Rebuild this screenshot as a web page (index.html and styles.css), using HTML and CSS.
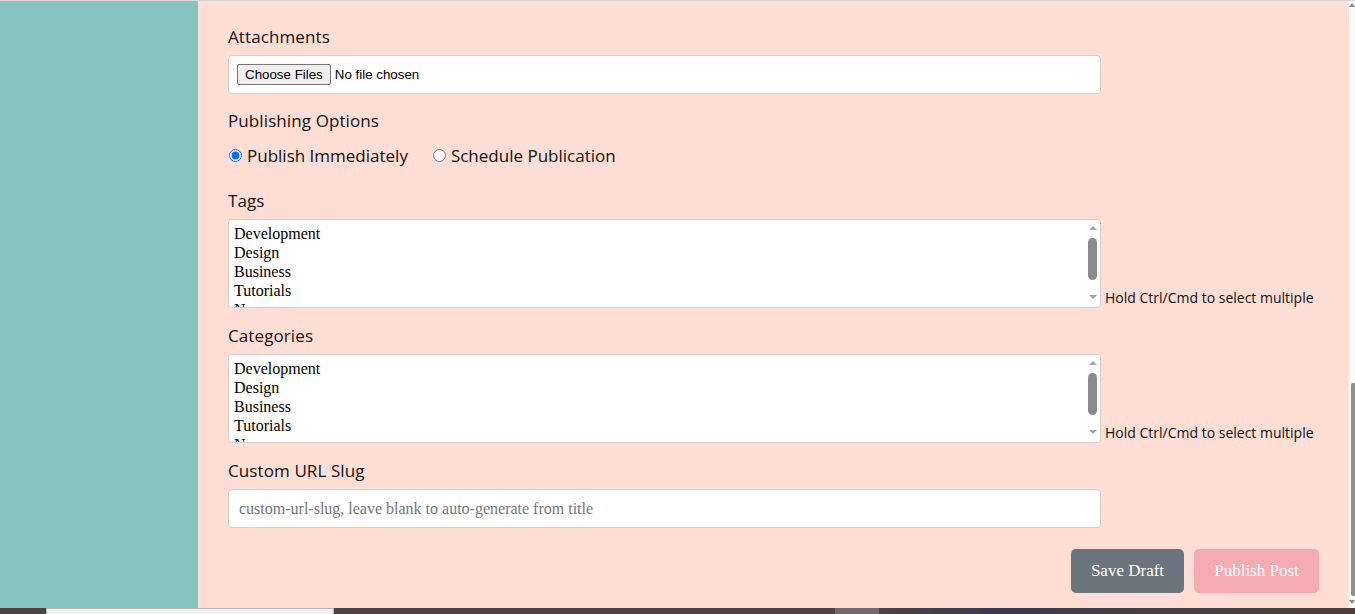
FILE: index.html
```html
<!DOCTYPE html>
<html lang="en">
<head>
<meta charset="utf-8">
<title>New Post</title>
<link rel="stylesheet" href="styles.css">
</head>
<body>
<div class="topline"></div>
<div class="page">
  <aside class="sidebar"></aside>
  <main class="main">
    <form class="form">
      <div class="field">
        <label class="label" for="files">Attachments</label>
        <div class="file-box"><input id="files" class="file-input" type="file" multiple></div>
      </div>

      <div class="field">
        <span class="label">Publishing Options</span>
        <div class="radios">
          <label class="radio"><input type="radio" name="pub" checked> Publish Immediately</label>
          <label class="radio"><input type="radio" name="pub"> Schedule Publication</label>
        </div>
      </div>

      <div class="field field-select">
        <label class="label" for="tags">Tags</label>
        <div class="select-row">
          <div class="listbox-wrap">
            <select id="tags" class="listbox" multiple>
              <option>Development</option>
              <option>Design</option>
              <option>Business</option>
              <option>Tutorials</option>
              <option>News</option>
            </select>
            <div class="fake-sb" aria-hidden="true">
              <span class="sb-arrow up"></span>
              <span class="sb-thumb"></span>
              <span class="sb-arrow down"></span>
            </div>
          </div>
          <small class="hint">Hold Ctrl/Cmd to select multiple</small>
        </div>
      </div>

      <div class="field field-select">
        <label class="label" for="cats">Categories</label>
        <div class="select-row">
          <div class="listbox-wrap">
            <select id="cats" class="listbox" multiple>
              <option>Development</option>
              <option>Design</option>
              <option>Business</option>
              <option>Tutorials</option>
              <option>News</option>
            </select>
            <div class="fake-sb" aria-hidden="true">
              <span class="sb-arrow up"></span>
              <span class="sb-thumb"></span>
              <span class="sb-arrow down"></span>
            </div>
          </div>
          <small class="hint">Hold Ctrl/Cmd to select multiple</small>
        </div>
      </div>

      <div class="field">
        <label class="label" for="slug">Custom URL Slug</label>
        <input id="slug" class="text-input" type="text" placeholder="custom-url-slug, leave blank to auto-generate from title">
      </div>

      <div class="actions">
        <button type="button" class="btn btn-draft">Save Draft</button>
        <button type="button" class="btn btn-publish">Publish Post</button>
      </div>
    </form>
  </main>
  <div class="vscroll">
    <div class="vscroll-arrow up"></div>
    <div class="vscroll-space"></div>
    <div class="vscroll-thumb"></div>
    <div class="vscroll-arrow down"></div>
  </div>
</div>
<div class="taskbar">
  <div class="task-left"></div>
  <div class="task-search"></div>
  <div class="task-mid"></div>
  <div class="task-item"></div>
  <div class="task-right"></div>
</div>
</body>
</html>
```

FILE: styles.css
```css
* { box-sizing: border-box; }

html, body {
  margin: 0;
  padding: 0;
  height: 614px;
  overflow: hidden;
}

body {
  font-family: "Open Sans", "Liberation Sans", sans-serif;
  color: #1a1a1a;
  background: #ffded6;
  display: flex;
  flex-direction: column;
}

.topline {
  height: 1px;
  background: #d9d6dc;
  flex: none;
}

.page {
  flex: 1;
  display: flex;
  min-height: 0;
}

.sidebar {
  width: 198px;
  flex: none;
  background: #87c4be;
}

.main {
  flex: 1;
  background: #ffded6;
  padding: 24px 30px 0 30px;
  min-width: 0;
}

.form {
  display: flex;
  flex-direction: column;
}

.field {
  margin-bottom: 15px;
}

.field-select {
  margin-bottom: 16px;
}

.label {
  display: block;
  font-size: 17px;
  line-height: 24px;
  margin-bottom: 6px;
  color: #111;
  letter-spacing: 0.1px;
}

.file-box {
  width: 873px;
  height: 39px;
  background: #fff;
  border: 1px solid #cfcfcf;
  border-radius: 4px;
  padding: 0 8px;
  display: flex;
  align-items: center;
}

.file-input {
  font-family: "Liberation Sans", Arial, sans-serif;
  font-size: 13.333px;
  color: #000;
}

.file-input::file-selector-button {
  font-family: "Liberation Sans", Arial, sans-serif;
  font-size: 13.333px;
  background: #efefef;
  border: 1px solid #767676;
  border-radius: 2px;
  padding: 1px 7px;
  margin-right: 4px;
  color: #000;
  height: 21px;
}

.radios {
  display: flex;
  gap: 24px;
  height: 24px;
  align-items: center;
  margin-top: 10px;
  margin-bottom: 7px;
}

.radio {
  display: flex;
  align-items: center;
  font-size: 17px;
  color: #111;
}

.radio input {
  margin: 0 5px 0 1px;
  width: 13px;
  height: 13px;
  accent-color: #0b6ef5;
}

.select-row {
  display: flex;
  align-items: flex-end;
}

.listbox-wrap {
  position: relative;
  width: 873px;
  height: 89px;
  flex: none;
}

.listbox {
  display: block;
  width: 873px;
  height: 89px;
  background: #fff;
  border: 1px solid #cfcfcf;
  border-radius: 4px;
  padding: 5px 4px 4px 4px;
  font-family: "Liberation Serif", "Times New Roman", serif;
  font-size: 16px;
  color: #000;
  outline: none;
  overflow-y: scroll;
}

.listbox option {
  padding: 0 1px;
  line-height: 19px;
  min-height: 19px;
}

.fake-sb {
  position: absolute;
  top: 1px;
  right: 1px;
  bottom: 1px;
  width: 15px;
  border-radius: 0 3px 3px 0;
  background: #fff;
  display: flex;
  flex-direction: column;
  align-items: center;
  pointer-events: none;
}

.sb-arrow {
  width: 0;
  height: 0;
  border-left: 4px solid transparent;
  border-right: 4px solid transparent;
  flex: none;
}

.sb-arrow.up {
  border-bottom: 4px solid #a3a3a3;
  margin-top: 6px;
}

.sb-arrow.down {
  border-top: 4px solid #a3a3a3;
  margin-top: 15px;
}

.sb-thumb {
  width: 9px;
  height: 42px;
  margin-top: 8px;
  border-radius: 5px;
  background: #8b8b8b;
  flex: none;
}

.hint {
  font-size: 14px;
  line-height: 18px;
  margin-left: 4px;
  padding-bottom: 1px;
  color: #111;
  white-space: nowrap;
}

.text-input {
  display: block;
  width: 873px;
  height: 39px;
  background: #fff;
  border: 1px solid #cfcfcf;
  border-radius: 4px;
  padding: 0 10px;
  font-family: "Liberation Serif", "Times New Roman", serif;
  font-size: 16px;
  color: #000;
  outline: none;
}

.text-input::placeholder {
  color: #767676;
}

.actions {
  display: flex;
  justify-content: flex-end;
  gap: 10px;
  margin-top: 6px;
}

.btn {
  height: 44px;
  border: none;
  border-radius: 5px;
  font-family: "Liberation Serif", "Times New Roman", serif;
  font-size: 17px;
  color: #fff;
  padding: 0;
  white-space: nowrap;
}

.btn-draft {
  background: #6c757d;
  width: 113px;
}

.btn-publish {
  background: #f4abb4;
  width: 125px;
}

.vscroll {
  width: 6px;
  flex: none;
  background: #fafafa;
  display: flex;
  flex-direction: column;
  align-items: flex-end;
  padding: 2px 0 4px 0;
}

.vscroll-arrow {
  width: 0;
  height: 0;
  border-left: 3px solid transparent;
  border-right: 3px solid transparent;
  flex: none;
}

.vscroll-arrow.up { border-bottom: 4px solid #8a8a8a; }
.vscroll-arrow.down { border-top: 4px solid #8a8a8a; }

.vscroll-space { height: 376px; flex: none; }

.vscroll-thumb {
  width: 4px;
  flex: 1;
  background: #8f8f8f;
  border-radius: 2px 0 0 2px;
  margin-bottom: 4px;
}

.taskbar {
  height: 6px;
  flex: none;
  display: flex;
  background: #4a4542;
}

.task-left { width: 46px; background: #4a4542; }
.task-search { width: 288px; background: #f0f0f0; border: 1px solid #b8b8b8; border-bottom: none; }
.task-mid { width: 501px; background: #4a4644; }
.task-item { width: 44px; background: #6d6b6b; }
.task-right {
  flex: 1;
  background: linear-gradient(90deg, #474443 0%, #3b3a55 25%, #453f46 55%, #4e3f38 100%);
}
```
